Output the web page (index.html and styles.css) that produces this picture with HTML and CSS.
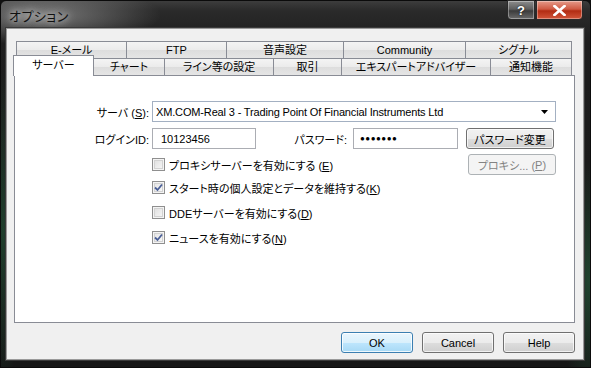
FILE: index.html
```html
<!DOCTYPE html>
<html lang="ja">
<head>
<meta charset="utf-8">
<title>オプション</title>
<link rel="stylesheet" href="styles.css">
</head>
<body>
<div class="window">
  <div class="titlebar">
    <div class="title">オプション</div>
    <div class="caption">
      <div class="cbtn help">?</div>
      <div class="cbtn close">
        <svg width="13" height="11" viewBox="0 0 13 11"><path d="M1.5 1 L11.5 10 M11.5 1 L1.5 10" stroke="#fff" stroke-width="2.6" stroke-linecap="square"/></svg>
      </div>
    </div>
  </div>
  <div class="client">
    <div class="tabrow top">
      <div class="tab w110">E-メール</div>
      <div class="tab w100">FTP</div>
      <div class="tab w117">音声設定</div>
      <div class="tab w122">Community</div>
      <div class="tab w107">シグナル</div>
    </div>
    <div class="tabrow bottom">
      <div class="tab sel w80">サーバー</div>
      <div class="tab w71">チャート</div>
      <div class="tab w109">ライン等の設定</div>
      <div class="tab w68">取引</div>
      <div class="tab w149">エキスパートアドバイザー</div>
      <div class="tab w82">通知機能</div>
    </div>
    <div class="panel">
      <div class="row r1">
        <div class="label">サーバ (<u>S</u>):</div>
        <div class="combo">
          <span class="latin">XM.COM-Real 3 - Trading Point Of Financial Instruments Ltd</span>
          <svg class="arrow" width="7" height="4" viewBox="0 0 7 4"><path d="M0 0 H7 L3.5 4 Z" fill="#000"/></svg>
        </div>
      </div>
      <div class="row r2">
        <div class="label">ログインID:</div>
        <div class="input login">10123456</div>
        <div class="plabel">パスワード:</div>
        <div class="input pass">●●●●●●●</div>
        <div class="btn pbtn">パスワード変更</div>
      </div>
      <div class="row r3">
        <div class="check"><span class="box"></span><span>プロキシサーバーを有効にする (<u>E</u>)</span></div>
        <div class="btn pbtn disabled">プロキシ... (<u>P</u>)</div>
      </div>
      <div class="row cr">
        <div class="check"><span class="box on"><svg width="9" height="9" viewBox="0 0 9 9"><path d="M1 4.5 L3.5 7 L8 1.5" fill="none" stroke="#4a5f97" stroke-width="1.8"/></svg></span><span>スタート時の個人設定とデータを維持する(<u>K</u>)</span></div>
      </div>
      <div class="row cr">
        <div class="check"><span class="box"></span><span>DDEサーバーを有効にする(<u>D</u>)</span></div>
      </div>
      <div class="row cr">
        <div class="check"><span class="box on"><svg width="9" height="9" viewBox="0 0 9 9"><path d="M1 4.5 L3.5 7 L8 1.5" fill="none" stroke="#4a5f97" stroke-width="1.8"/></svg></span><span>ニュースを有効にする(<u>N</u>)</span></div>
      </div>
    </div>
    <div class="buttons">
      <div class="btn dlg def">OK</div>
      <div class="btn dlg">Cancel</div>
      <div class="btn dlg">Help</div>
    </div>
  </div>
</div>
</body>
</html>
```

FILE: styles.css
```css
* { box-sizing: border-box; }
html, body { margin: 0; padding: 0; }
body {
  width: 591px;
  height: 368px;
  overflow: hidden;
  background: #111;
  font-family: "Liberation Sans", "Noto Sans CJK JP", sans-serif;
  font-size: 11px;
  font-feature-settings: "palt" 1;
  color: #000;
}
.window {
  width: 591px;
  height: 368px;
  display: flex;
  flex-direction: column;
  background:
    radial-gradient(ellipse 120px 30px at 40px 14px, rgba(150,150,150,0.75), rgba(120,120,120,0) 100%),
    radial-gradient(ellipse 30px 120px at 588px 280px, rgba(40,110,70,0.5), rgba(0,0,0,0) 100%),
    radial-gradient(ellipse 20px 160px at 2px 230px, rgba(40,110,70,0.45), rgba(0,0,0,0) 100%),
    linear-gradient(180deg, #3d3d3d 0px, #2a2a2a 10px, #1e1e1e 40px, #161616 100%);
  border-radius: 6px 6px 0 0;
  border: 1px solid #0b0b0b;
}
.titlebar {
  height: 27px;
  display: flex;
  justify-content: space-between;
  align-items: flex-start;
  flex: none;
}
.title {
  padding: 5px 0 0 8px;
  font-size: 13px;
  color: #111;
  text-shadow: 0 0 6px #d8d8d8, 0 0 10px #cfcfcf;
  letter-spacing: 0.5px;
}
.caption {
  display: flex;
  gap: 1px;
  margin-right: 7px;
  margin-top: -1px;
}
.cbtn {
  height: 20px;
  display: flex;
  align-items: center;
  justify-content: center;
  border: 1px solid #2a2a2a;
  box-shadow: inset 0 0 0 1px rgba(255,255,255,0.35);
  color: #fff;
  font-weight: bold;
  font-size: 13px;
}
.help {
  width: 28px;
  border-radius: 0 0 0 4px;
  background: linear-gradient(180deg, #8d8d8d 0%, #5e5e5e 45%, #3c3c3c 55%, #6c6c6c 100%);
  text-shadow: 0 0 2px #000;
}
.close {
  width: 47px;
  border-radius: 0 0 4px 0;
  background: linear-gradient(180deg, #e59b8a 0%, #cf5a43 45%, #b22c13 55%, #d2563a 100%);
}
.client {
  flex: 1;
  margin: 0 6px 7px 5px;
  background: #f0f0f0;
  border: 1px solid #9a9a9a;
  box-shadow: 0 0 0 1px #3a3a3a;
  padding: 12px 8px 0 7px;
  display: flex;
  flex-direction: column;
}
.tabrow {
  display: flex;
  height: 17px;
  margin: 0 1px 0 2px;
  flex: none;
}
.tab {
  flex: none;
  height: 17px;
  border: 1px solid #898c95;
  border-bottom: none;
  margin-right: -1px;
  background: linear-gradient(180deg, #f4f4f4 0%, #ebebeb 50%, #dddddd 51%, #e5e5e5 100%);
  text-align: center;
  line-height: 16px;
  white-space: nowrap;
  color: #000;
}
.tabrow.bottom { position: relative; z-index: 2; }
.tab.sel {
  background: #fff;
  margin-left: -3px;
  margin-top: -3px;
  height: 21px;
  line-height: 18px;
  position: relative;
  z-index: 3;
}
.w110 { width: 111px; }
.w100 { width: 101px; }
.w117 { width: 118px; }
.w122 { width: 123px; }
.w107 { width: 107px; }
.w80 { width: 81px; }
.w71 { width: 72px; }
.w109 { width: 110px; }
.w68 { width: 69px; }
.w149 { width: 150px; }
.w82 { width: 82px; }
.panel {
  height: 248px;
  background: #fff;
  border: 1px solid #898c95;
  padding: 25px 18px 0 0;
  display: flex;
  flex-direction: column;
  flex: none;
}
.row {
  display: flex;
  align-items: center;
  flex: none;
}
.r1 { height: 21px; margin-bottom: 6px; }
.r2 { height: 21px; margin-bottom: 5px; }
.r3 { height: 21px; padding-left: 137px; justify-content: space-between; }
.cr { height: 25px; padding-left: 137px; }
.label {
  width: 134px;
  text-align: right;
  margin-right: 3px;
  white-space: nowrap;
  flex: none;
}
.combo {
  flex: 1;
  height: 21px;
  border: 1px solid #a3b0c2;
  display: flex;
  align-items: center;
  justify-content: space-between;
  padding: 0 7px 0 3px;
  white-space: nowrap;
}
.latin { letter-spacing: -0.15px; }
.input {
  height: 21px;
  border: 1px solid #abadb3;
  display: flex;
  align-items: center;
  padding-left: 8px;
  flex: none;
}
.login { width: 104px; }
.plabel { width: 91px; text-align: right; margin-right: 6px; flex: none; }
.pass { width: 105px; font-size: 8px; letter-spacing: 0.5px; padding-left: 6px; }
.btn {
  display: flex;
  align-items: center;
  justify-content: center;
  border: 1px solid #707070;
  border-radius: 3px;
  background: linear-gradient(180deg, #f2f2f2 0%, #ebebeb 50%, #dddddd 51%, #cfcfcf 100%);
  box-shadow: inset 0 0 0 1px rgba(255,255,255,0.7);
  white-space: nowrap;
  flex: none;
}
.pbtn { width: 88px; height: 21px; margin-left: 8px; }
.disabled {
  border-color: #adb2b5;
  background: #f4f4f4;
  color: #838383;
  box-shadow: none;
}
.check { display: flex; align-items: center; white-space: nowrap; }
.box {
  width: 13px;
  height: 13px;
  border: 1px solid #8f8f8f;
  background: linear-gradient(135deg, #dcdcdc, #fafafa);
  box-shadow: inset 0 0 0 1px #f4f4f4, inset 0 0 0 2px #d2d2d2;
  margin-right: 4px;
  display: flex;
  align-items: center;
  justify-content: center;
  flex: none;
}
.box.on { background: linear-gradient(135deg, #e2e2e2, #fbfbfb); }
.buttons {
  display: flex;
  justify-content: flex-end;
  gap: 9px;
  margin-top: 9px;
}
.dlg { width: 72px; height: 21px; }
.def {
  border-color: #3c7fb1;
  background: linear-gradient(180deg, #eaf6fd 0%, #d9f0fc 50%, #bee6fd 51%, #a7d9f5 100%);
  box-shadow: inset 0 0 0 1px rgba(255,255,255,0.8);
}
u { text-decoration: underline; text-underline-offset: 1px; }
```
